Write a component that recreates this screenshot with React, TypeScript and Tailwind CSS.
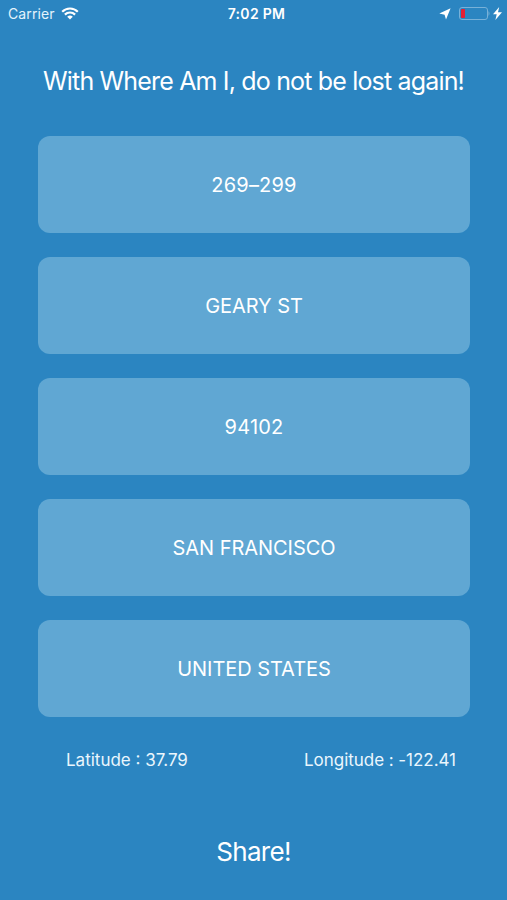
const rows = ["269–299", "GEARY ST", "94102", "SAN FRANCISCO", "UNITED STATES"];

export default function App() {
  return (
    <main className="flex h-[900px] w-[507px] flex-col overflow-hidden bg-[#2b85c1] font-['Inter',sans-serif] text-white">
      <header className="grid h-[27px] grid-cols-3 items-center pl-[8px] pr-[5px] text-[14px]">
        <div className="flex items-center gap-[6px] text-[#e4f3fc]">
          <span className="tracking-[0.1px]">Carrier</span>
          <svg width="18" height="13" viewBox="0 0 18 13" fill="none" stroke="white" strokeWidth="2.2">
            <path d="M1.200 4.700C5.500.400 12.500.400 16.800 4.700M3.900 7.600C6.700 4.800 11.300 4.800 14.100 7.600" />
            <path d="M6.200 9.700Q9 7.100 11.800 9.700L9 12.500Z" fill="white" stroke="none" />
          </svg>
        </div>
        <span className="pl-[3px] text-center text-[14px] font-semibold tracking-[0.3px]">7:02 PM</span>
        <div className="flex items-center justify-end gap-[2px]">
          <svg className="mr-[6px]" width="12" height="12" viewBox="0 0 12 12" fill="white"><path d="M11.600.300L7 11.500L5.600 6.700L.300 5.500Z" /></svg>
          <svg width="32" height="13" viewBox="0 0 32 13">
            <rect x=".5" y=".5" width="28" height="12" rx="2.500" fill="none" stroke="#78b1d8" />
            <rect x="2" y="2" width="4" height="9" rx=".7" fill="#e51f34" />
            <path d="M29.500 4Q31.500 6.500 29.500 9Z" fill="#78b1d8" />
          </svg>
          <svg width="9" height="13" viewBox="0 0 9 13" fill="white"><path d="M6.200 0L0 7.300H3.700L2.400 13L9 5.200H5Z" /></svg>
        </div>
      </header>
      <h1 className="mt-[36px] h-[36px] whitespace-nowrap text-center text-[25px] leading-[36px] tracking-[-0.83px]">With Where Am I, do not be lost again!</h1>
      <section className="ml-[38px] mr-[37px] mt-[37px] flex flex-col gap-[24px]">
        {rows.map((row) => (
          <div key={row} className={`flex h-[97px] items-center justify-center rounded-[12px] bg-[#60a7d3] text-[20px] ${/\d/.test(row) ? "tracking-[0.2px]" : "tracking-[-0.05px]"}`}>{row}</div>
        ))}
      </section>
      <div className="mt-[32px] flex h-[24px] items-center justify-between pl-[66px] pr-[51px] text-[17px] text-[#eaf6fd]">
        <span>Latitude : 37.79</span>
        <span className="tracking-[-0.04px]">Longitude : -122.41</span>
      </div>
      <button className="mt-[61px] h-[36px] text-center text-[26px] leading-[36px] tracking-[-0.65px]">Share!</button>
    </main>
  );
}
